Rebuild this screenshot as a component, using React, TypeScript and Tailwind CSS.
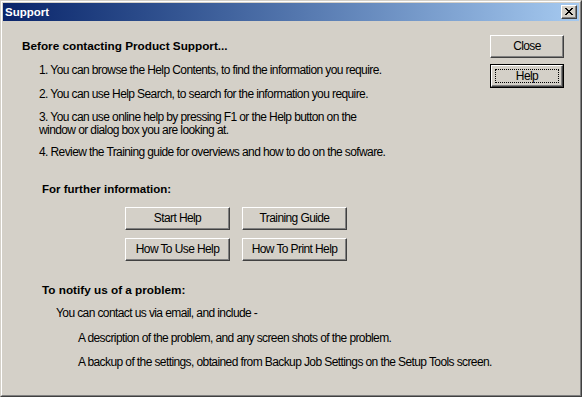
import type { ReactNode } from 'react';

function WinButton({ children, isDefault = false, className = '' }: { children: ReactNode; isDefault?: boolean; className?: string }) {
    if (isDefault) {
        return (
            <div className={`border border-black ${className}`}>
                <div className="flex h-full w-full border border-t-white border-l-white border-r-[#404040] border-b-[#404040] p-[3px] shadow-[inset_-1px_-1px_#808080]">
                    <div className="flex h-full w-full items-center justify-center border border-dotted border-black">
                        {children}
                    </div>
                </div>
            </div>
        );
    }
    return (
        <div
            className={`flex items-center justify-center border border-t-white border-l-white border-r-[#404040] border-b-[#404040] shadow-[inset_-1px_-1px_#808080] ${className}`}
        >
            {children}
        </div>
    );
}

export default function App() {
    return (
        <div className="h-[397px] w-[582px] border border-t-[#d4d0c8] border-l-[#d4d0c8] border-r-[#404040] border-b-[#404040] bg-[#d4d0c8] font-['Liberation_Sans',Arial,sans-serif] text-[12px] leading-[13px] tracking-[-0.6px] text-black">
            <div className="flex h-full flex-col border border-t-white border-l-white border-r-[#808080] border-b-[#808080] p-px">
                <div className="flex h-[18px] shrink-0 items-center justify-between bg-gradient-to-r from-[#0a246a] to-[#a6caf0] pl-[2px] pr-[2px]">
                    <span className="text-[11.5px] font-bold tracking-normal text-white">Support</span>
                    <div className="flex h-[14px] w-[16px] items-center justify-center border border-t-white border-l-white border-r-[#404040] border-b-[#404040] bg-[#d4d0c8] shadow-[inset_-1px_-1px_#808080]">
                        <svg width="8" height="7" viewBox="0 0 8 7" shapeRendering="crispEdges" className="mb-px">
                            <path
                                d="M0 0h2v1h-2zM6 0h2v1h-2zM1 1h2v1h-2zM5 1h2v1h-2zM2 2h4v1h-4zM3 3h2v1h-2zM2 4h4v1h-4zM1 5h2v1h-2zM5 5h2v1h-2zM0 6h2v1h-2zM6 6h2v1h-2z"
                                fill="#000"
                            />
                        </svg>
                    </div>
                </div>

                <div className="flex flex-1">
                    <div className="min-w-0 flex-1 pl-[19px] pt-[18px]">
                        <div className="whitespace-nowrap text-[11.75px] font-bold tracking-normal">
                            Before contacting Product Support...
                        </div>
                        <div className="ml-[17px] mt-[12px] whitespace-nowrap">
                            1. You can browse the Help Contents, to find the information you require.
                        </div>
                        <div className="ml-[17px] mt-[11px] whitespace-nowrap">
                            2. You can use Help Search, to search for the information you require.
                        </div>
                        <div className="ml-[17px] mt-[10px] whitespace-nowrap">
                            3. You can use online help by pressing F1 or the Help button on the
                            <br />
                            window or dialog box you are looking at.
                        </div>
                        <div className="ml-[17px] mt-[9px] whitespace-nowrap">
                            4. Review the Training guide for overviews and how to do on the sofware.
                        </div>

                        <div className="ml-[20px] mt-[24px] whitespace-nowrap text-[11.5px] font-bold tracking-normal">
                            For further information:
                        </div>
                        <div className="ml-[103px] mt-[11px] grid w-max grid-cols-[105px_105px] gap-x-[12px] gap-y-[8px]">
                            <WinButton className="h-[23px]">Start Help</WinButton>
                            <WinButton className="h-[23px]">Training Guide</WinButton>
                            <WinButton className="h-[23px]">How To Use Help</WinButton>
                            <WinButton className="h-[23px]">How To Print Help</WinButton>
                        </div>

                        <div className="ml-[20px] mt-[22px] whitespace-nowrap text-[11.75px] font-bold tracking-normal">
                            To notify us of a problem:
                        </div>
                        <div className="ml-[34px] mt-[11px] whitespace-nowrap">
                            You can contact us via email, and include -
                        </div>
                        <div className="ml-[56px] mt-[12px] whitespace-nowrap">
                            A description of the problem, and any screen shots of the problem.
                        </div>
                        <div className="ml-[56px] mt-[11px] whitespace-nowrap">
                            A backup of the settings, obtained from Backup Job Settings on the Setup Tools screen.
                        </div>
                    </div>

                    <div className="flex shrink-0 flex-col gap-[6px] pr-[15px] pt-[14px]">
                        <WinButton className="h-[23px] w-[74px]">Close</WinButton>
                        <WinButton isDefault className="h-[24px] w-[74px]">
                            Help
                        </WinButton>
                    </div>
                </div>
            </div>
        </div>
    );
}
